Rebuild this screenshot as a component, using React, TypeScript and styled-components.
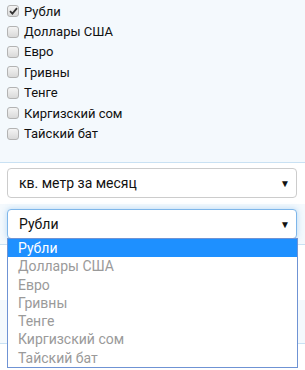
import { createGlobalStyle, styled } from 'styled-components'

const currencies = ['Рубли', 'Доллары США', 'Евро', 'Гривны', 'Тенге', 'Киргизский сом', 'Тайский бат']

const GlobalStyle = createGlobalStyle`
    body {
        margin: 0;
        min-height: 100vh;
        background: #fff;
        font-family: Roboto, 'Liberation Sans', Arial, sans-serif;
        color: #222;
    }
`

const Page = styled.div`
    min-height: 370px;
    background: #fff;
`

const Band = styled.div<{ $tint?: boolean; $line?: boolean; $h: number }>`
    box-sizing: border-box;
    height: ${(p) => p.$h}px;
    background: ${(p) => (p.$tint ? '#f4f9fd' : '#fff')};
    border-bottom: ${(p) => (p.$line ? '1px solid #c9e1f3' : 'none')};
    padding: 5px 8px 0 7px;
`

const CheckList = styled.div`
    display: flex;
    flex-direction: column;
    padding-top: 1px;
    margin-top: -5px;
`

const CheckRow = styled.label`
    display: flex;
    align-items: center;
    gap: 5px;
    height: 20.4px;
    font-size: 13px;
    color: #111;
`

const Box = styled.span`
    box-sizing: border-box;
    width: 12px;
    height: 12px;
    border: 1px solid #b3b3b3;
    border-radius: 3px;
    background: linear-gradient(#f4f4f4, #d9d9d9);
    display: flex;
    align-items: center;
    justify-content: center;
    flex-shrink: 0;
`

const Select = styled.div<{ $focus?: boolean }>`
    box-sizing: border-box;
    position: relative;
    height: 30px;
    display: flex;
    align-items: center;
    justify-content: space-between;
    padding: 0 6px 0 11px;
    border: 1px solid ${(p) => (p.$focus ? '#7eb6ea' : '#cccccc')};
    border-radius: 4px;
    background: #fff;
    font-size: 14px;
    color: #111;
    box-shadow: ${(p) => (p.$focus ? '0 0 6px rgba(102, 175, 233, 0.45)' : 'none')};
`

const Arrow = styled.span`
    font-size: 10px;
    color: #111;
`

const Dropdown = styled.ul`
    position: absolute;
    top: 28px;
    left: -1px;
    width: 291px;
    box-sizing: border-box;
    margin: 0;
    padding: 0;
    list-style: none;
    background: #fff;
    border: 1px solid #6f93d4;
    z-index: 5;
`

const Option = styled.li<{ $active?: boolean }>`
    height: 18.3px;
    line-height: 18px;
    padding-left: 10px;
    font-size: 14px;
    color: ${(p) => (p.$active ? '#fff' : '#9a9a9a')};
    background: ${(p) => (p.$active ? '#1e90ff' : 'transparent')};
`

const Tick = () => (
    <svg width="9" height="8" viewBox="0 0 9 8">
        <path d="M1 4.2 L3.4 6.6 L8 1.2" fill="none" stroke="#333" strokeWidth="1.8" />
    </svg>
)

export default function App() {
    return (
        <Page>
            <GlobalStyle />
            <Band $tint $line $h={163}>
                <CheckList>
                    {currencies.map((c, i) => (
                        <CheckRow key={c}>
                            <Box>{i === 0 && <Tick />}</Box>
                            {c}
                        </CheckRow>
                    ))}
                </CheckList>
            </Band>
            <Band $h={41}>
                <Select>
                    кв. метр за месяц
                    <Arrow>▼</Arrow>
                </Select>
            </Band>
            <Band $tint $line $h={41}>
                <Select $focus>
                    Рубли
                    <Arrow>▼</Arrow>
                    <Dropdown>
                        {currencies.map((c, i) => (
                            <Option key={c} $active={i === 0}>
                                {c}
                            </Option>
                        ))}
                    </Dropdown>
                </Select>
            </Band>
            <Band $h={55} />
            <Band $tint $line $h={44} />
        </Page>
    )
}
